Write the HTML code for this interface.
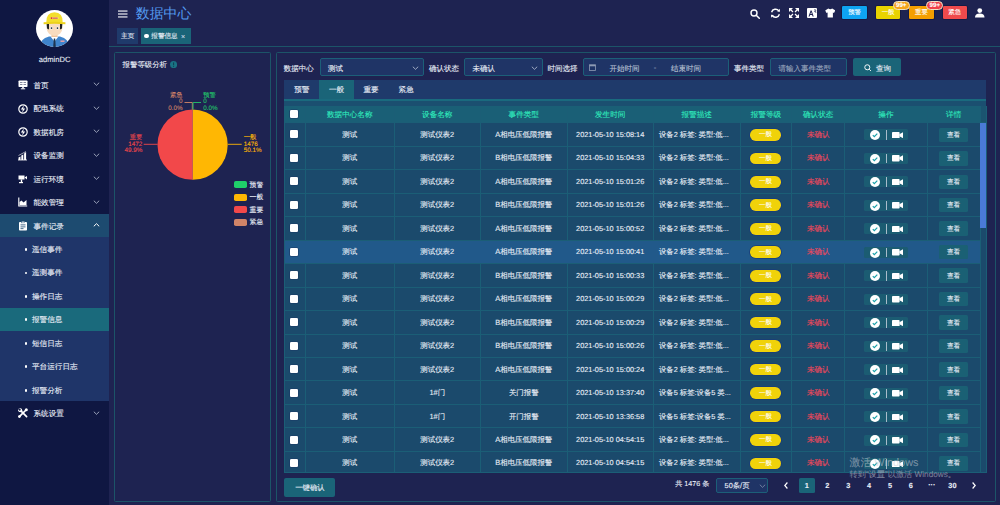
<!DOCTYPE html><html><head><meta charset="utf-8"><style>
*{margin:0;padding:0;box-sizing:border-box}
html,body{width:1000px;height:505px;overflow:hidden;background:#1e2351;font-family:"Liberation Sans",sans-serif;color:#e9eef7;font-weight:400;-webkit-text-stroke:0.1px;text-rendering:geometricPrecision}
.ab{position:absolute}
.t{position:absolute;white-space:nowrap;line-height:1}
.c{position:absolute;white-space:nowrap;line-height:1;transform:translate(-50%,-50%)}
.l{position:absolute;white-space:nowrap;line-height:1;transform:translateY(-50%)}
.r{position:absolute;white-space:nowrap;line-height:1;transform:translate(-100%,-50%)}
</style></head><body>

<div class="ab" style="left:0;top:0;width:109px;height:505px;background:#0f1742"></div>
<svg class="ab" style="left:36.1px;top:9.9px" width="37" height="37" viewBox="0 0 37 37">
<defs><clipPath id="av"><circle cx="18.5" cy="18.5" r="18.5"/></clipPath></defs>
<circle cx="18.5" cy="18.5" r="18.5" fill="#fff"/>
<g clip-path="url(#av)">
<path d="M3 37 Q4 29 13 26.5 L24 26.5 Q33 29 34 37 Z" fill="#3f84cc"/>
<path d="M14.5 26.5 L18.5 31.5 L22.5 26.5 Z" fill="#fff"/>
<path d="M17.8 28.5 L19.2 28.5 L19.8 37 L17.2 37 Z" fill="#1f3550"/>
<rect x="15.5" y="22" width="6" height="5" fill="#f0c39a"/>
<ellipse cx="18.5" cy="18.6" rx="7.8" ry="7.4" fill="#f8dcbf"/>
<path d="M10.6 14 L13 14 L13 19.5 L11 18.5 Z" fill="#222"/>
<path d="M26.4 14 L24 14 L24 19.5 L26 18.5 Z" fill="#222"/>
<circle cx="15.3" cy="18" r="1.5" fill="#fff"/><circle cx="21.7" cy="18" r="1.5" fill="#fff"/>
<circle cx="15.5" cy="18.1" r="0.9" fill="#1d2a3a"/><circle cx="21.5" cy="18.1" r="0.9" fill="#1d2a3a"/>
<path d="M10.3 12.5 Q10 2.5 18.5 2.3 Q27 2.5 26.7 12.5 Z" fill="#f3de2c"/>
<path d="M7.6 12.3 Q18.5 11 29.4 12.3 L29.4 14.2 Q18.5 13.2 7.6 14.2 Z" fill="#ecd21c"/>
<rect x="14.8" y="7.3" width="7.5" height="1.6" fill="#fff" opacity=".7"/>
<rect x="14.8" y="7.3" width="1.6" height="1.6" fill="#d22"/><rect x="16.8" y="7.6" width="5" height="1" fill="#c33"/>
<rect x="24.5" y="30.5" width="4" height="1.4" fill="#f6a0a0"/>
</g></svg>
<div class="c" style="left:54.6px;top:60.2px;font-size:7.6px">adminDC</div>
<div class="ab" style="left:0;top:213.94px;width:109px;height:23.44px;background:#1d4b70"></div>
<div class="ab" style="left:0;top:237.38px;width:109px;height:164.08px;background:#1f3569"></div>
<div class="ab" style="left:0;top:307.70px;width:109px;height:23.44px;background:#1a6a7c"></div>
<svg class="ab" style="left:17.5px;top:80.22px" width="10" height="10" viewBox="0 0 10 10"><rect x="0.5" y="0.5" width="9" height="6.5" rx="0.8" fill="#fff"/><rect x="2" y="2" width="2.5" height="1" fill="#0f1742" opacity=".5"/><rect x="2" y="4" width="2.5" height="1" fill="#0f1742" opacity=".5"/><rect x="5.5" y="2" width="2.5" height="1" fill="#0f1742" opacity=".5"/><rect x="5.5" y="4" width="2.5" height="1" fill="#0f1742" opacity=".5"/><rect x="4.2" y="7" width="1.6" height="1.5" fill="#fff"/><rect x="2.8" y="8.3" width="4.4" height="1" fill="#fff"/></svg>
<div class="l" style="left:33.5px;top:85.92px;font-size:7.6px">首页</div>
<svg class="ab" style="left:92.8px;top:82.42px" width="7" height="4" viewBox="-0.5 -0.5 7 4"><path d="M0.3 0.2 L3 2.8 L5.7 0.2" fill="none" stroke="#c8d0e0" stroke-width="0.75"/></svg>
<svg class="ab" style="left:17.5px;top:103.66px" width="10" height="10" viewBox="0 0 10 10"><circle cx="5" cy="5" r="4.2" fill="none" stroke="#fff" stroke-width="1.2"/><path d="M5.8 1.5 L2.8 5.4 L4.8 5.4 L4.2 8.5 L7.2 4.6 L5.2 4.6 Z" fill="#fff"/></svg>
<div class="l" style="left:33.5px;top:109.36px;font-size:7.6px">配电系统</div>
<svg class="ab" style="left:92.8px;top:105.86px" width="7" height="4" viewBox="-0.5 -0.5 7 4"><path d="M0.3 0.2 L3 2.8 L5.7 0.2" fill="none" stroke="#c8d0e0" stroke-width="0.75"/></svg>
<svg class="ab" style="left:17.5px;top:127.10px" width="10" height="10" viewBox="0 0 10 10"><circle cx="5" cy="5" r="4.2" fill="none" stroke="#fff" stroke-width="1.2"/><path d="M5.8 1.5 L2.8 5.4 L4.8 5.4 L4.2 8.5 L7.2 4.6 L5.2 4.6 Z" fill="#fff"/></svg>
<div class="l" style="left:33.5px;top:132.80px;font-size:7.6px">数据机房</div>
<svg class="ab" style="left:92.8px;top:129.3px" width="7" height="4" viewBox="-0.5 -0.5 7 4"><path d="M0.3 0.2 L3 2.8 L5.7 0.2" fill="none" stroke="#c8d0e0" stroke-width="0.75"/></svg>
<svg class="ab" style="left:17.5px;top:150.54px" width="10" height="10" viewBox="0 0 10 10"><path d="M0.5 9 L0.5 6.5 L2.5 5.5 L2.5 9 Z M3.3 9 L3.3 4.5 L5.3 3.5 L5.3 9 Z M6.1 9 L6.1 2.5 L8.1 1 L8.1 9 Z" fill="#fff"/><path d="M0.5 4.5 L8 0.5" stroke="#fff" stroke-width="0.6"/><rect x="0" y="8.6" width="9" height="0.8" fill="#fff"/></svg>
<div class="l" style="left:33.5px;top:156.24px;font-size:7.6px">设备监测</div>
<svg class="ab" style="left:92.8px;top:152.74px" width="7" height="4" viewBox="-0.5 -0.5 7 4"><path d="M0.3 0.2 L3 2.8 L5.7 0.2" fill="none" stroke="#c8d0e0" stroke-width="0.75"/></svg>
<svg class="ab" style="left:17.5px;top:173.98px" width="10" height="10" viewBox="0 0 10 10"><rect x="0.5" y="1.5" width="6" height="4" fill="#fff"/><path d="M6.5 3.5 L9 2 L9 5.5 Z" fill="#fff"/><rect x="2.8" y="5.5" width="1.4" height="2.5" fill="#fff"/><rect x="1" y="8" width="4" height="1.2" fill="#fff"/></svg>
<div class="l" style="left:33.5px;top:179.68px;font-size:7.6px">运行环境</div>
<svg class="ab" style="left:92.8px;top:176.18px" width="7" height="4" viewBox="-0.5 -0.5 7 4"><path d="M0.3 0.2 L3 2.8 L5.7 0.2" fill="none" stroke="#c8d0e0" stroke-width="0.75"/></svg>
<svg class="ab" style="left:17.5px;top:197.42px" width="10" height="10" viewBox="0 0 10 10"><path d="M0.8 0.5 L0.8 9 L9.2 9" fill="none" stroke="#fff" stroke-width="1.1"/><path d="M1.5 8.3 L1.5 5 L3.5 3.5 L5.5 5.5 L8.5 3 L8.5 8.3 Z" fill="#fff"/></svg>
<div class="l" style="left:33.5px;top:203.12px;font-size:7.6px">能效管理</div>
<svg class="ab" style="left:92.8px;top:199.62px" width="7" height="4" viewBox="-0.5 -0.5 7 4"><path d="M0.3 0.2 L3 2.8 L5.7 0.2" fill="none" stroke="#c8d0e0" stroke-width="0.75"/></svg>
<svg class="ab" style="left:17.5px;top:220.86px" width="10" height="10" viewBox="0 0 10 10"><rect x="1" y="1" width="8" height="8.5" rx="0.8" fill="#fff"/><rect x="3.5" y="0.3" width="3" height="1.6" fill="#fff" stroke="#1d4b70" stroke-width="0.4"/><rect x="2.5" y="3.5" width="5" height="0.8" fill="#1d4b70"/><rect x="2.5" y="5.5" width="5" height="0.8" fill="#1d4b70"/><rect x="2.5" y="7.3" width="3" height="0.8" fill="#1d4b70"/></svg>
<div class="l" style="left:33.5px;top:226.56px;font-size:7.6px">事件记录</div>
<svg class="ab" style="left:92.8px;top:223.06px" width="7" height="4" viewBox="-0.5 -0.5 7 4"><path d="M0.3 2.8 L3 0.2 L5.7 2.8" fill="none" stroke="#fff" stroke-width="1.0"/></svg>
<div class="ab" style="left:24.6px;top:248.10px;width:2.8px;height:2.8px;border-radius:50%;background:#fff"></div>
<div class="l" style="left:32px;top:250.00px;font-size:7.6px">遥信事件</div>
<div class="ab" style="left:24.6px;top:271.54px;width:2.8px;height:2.8px;border-radius:50%;background:#fff"></div>
<div class="l" style="left:32px;top:273.44px;font-size:7.6px">遥测事件</div>
<div class="ab" style="left:24.6px;top:294.98px;width:2.8px;height:2.8px;border-radius:50%;background:#fff"></div>
<div class="l" style="left:32px;top:296.88px;font-size:7.6px">操作日志</div>
<div class="ab" style="left:24.6px;top:318.42px;width:2.8px;height:2.8px;border-radius:50%;background:#fff"></div>
<div class="l" style="left:32px;top:320.32px;font-size:7.6px">报警信息</div>
<div class="ab" style="left:24.6px;top:341.86px;width:2.8px;height:2.8px;border-radius:50%;background:#fff"></div>
<div class="l" style="left:32px;top:343.76px;font-size:7.6px">短信日志</div>
<div class="ab" style="left:24.6px;top:365.30px;width:2.8px;height:2.8px;border-radius:50%;background:#fff"></div>
<div class="l" style="left:32px;top:367.20px;font-size:7.6px">平台运行日志</div>
<div class="ab" style="left:24.6px;top:388.74px;width:2.8px;height:2.8px;border-radius:50%;background:#fff"></div>
<div class="l" style="left:32px;top:390.64px;font-size:7.6px">报警分析</div>
<svg class="ab" style="left:17.5px;top:408.18px" width="10" height="10" viewBox="0 0 10 10"><path d="M2.2 2.2 L8.6 8.6" stroke="#fff" stroke-width="1.7" stroke-linecap="round"/><path d="M8 2 L1.6 8.4" stroke="#fff" stroke-width="1.7" stroke-linecap="round"/><circle cx="2.2" cy="2.2" r="2" fill="#fff"/><path d="M0.4 1.6 L1.6 0.4 L3 1.8 L1.8 3 Z" fill="#0f1742"/><circle cx="8.3" cy="1.7" r="1.5" fill="#fff"/><circle cx="1.4" cy="8.6" r="1.4" fill="#fff"/></svg>
<div class="l" style="left:33.5px;top:414.08px;font-size:7.6px">系统设置</div>
<svg class="ab" style="left:92.8px;top:410.58000000000004px" width="7" height="4" viewBox="-0.5 -0.5 7 4"><path d="M0.3 0.2 L3 2.8 L5.7 0.2" fill="none" stroke="#c8d0e0" stroke-width="0.75"/></svg>
<svg class="ab" style="left:118px;top:9.5px" width="9.5" height="8" viewBox="0 0 9.5 8"><rect x="0" y="0.5" width="9.5" height="1.1" fill="#fff"/><rect x="0" y="3.45" width="9.5" height="1.1" fill="#fff"/><rect x="0" y="6.4" width="9.5" height="1.1" fill="#fff"/></svg>
<div class="l" style="left:135.8px;top:13.6px;font-size:13.9px;color:#559cf2;font-weight:400;-webkit-text-stroke:0">数据中心</div>
<svg class="ab" style="left:750px;top:8.5px" width="10" height="10" viewBox="0 0 10 10"><circle cx="4" cy="4" r="3" fill="none" stroke="#fff" stroke-width="1.4"/><path d="M6.2 6.2 L9.3 9.3" stroke="#fff" stroke-width="1.5" stroke-linecap="round"/></svg>
<svg class="ab" style="left:769.5px;top:8px" width="11" height="10.5" viewBox="0 0 11 10.5"><path d="M1.6 4.2 A4 4 0 0 1 8.8 3" fill="none" stroke="#fff" stroke-width="1.4"/><path d="M9.4 6.3 A4 4 0 0 1 2.2 7.5" fill="none" stroke="#fff" stroke-width="1.4"/><path d="M7.2 3.6 L10 3.8 L9.8 0.8 Z" fill="#fff"/><path d="M3.8 6.9 L1 6.7 L1.2 9.7 Z" fill="#fff"/></svg>
<svg class="ab" style="left:789px;top:8px" width="10" height="10" viewBox="0 0 10 10"><g fill="#fff"><path d="M0 0 L4 0 L0 4 Z M10 0 L6 0 L10 4 Z M0 10 L4 10 L0 6 Z M10 10 L6 10 L10 6 Z"/></g><g stroke="#fff" stroke-width="1.2"><path d="M1.5 1.5 L4 4 M8.5 1.5 L6 4 M1.5 8.5 L4 6 M8.5 8.5 L6 6"/></g></svg>
<svg class="ab" style="left:807px;top:8px" width="10" height="10" viewBox="0 0 10 10"><rect x="0" y="0" width="10" height="10" rx="1" fill="#fff"/><path d="M1.5 8.5 L3.6 2.5 L4.6 2.5 L6.7 8.5 L5.6 8.5 L5.1 7 L3.1 7 L2.6 8.5 Z M3.4 6 L4.8 6 L4.1 3.9 Z" fill="#1e2351"/><path d="M7 1.8 H8.8 V3 H7.6 V3.6 H8.8 V5" fill="none" stroke="#1e2351" stroke-width="0.6"/></svg>
<svg class="ab" style="left:824.5px;top:8px" width="10.5" height="10" viewBox="0 0 10.5 10"><path d="M3.3 0.5 Q5.25 2 7.2 0.5 L10.3 2.4 L9 5 L7.9 4.5 L7.9 9.6 L2.6 9.6 L2.6 4.5 L1.5 5 L0.2 2.4 Z" fill="#fff"/></svg>
<div class="ab" style="left:842.4px;top:6.4px;width:24.3px;height:12.3px;background:#0ea4f2;border-radius:1.3px;box-shadow:0 0 0 0.8px #151a40"></div>
<div class="c" style="left:854.55px;top:13.3px;font-size:6.4px;color:#fff;font-weight:500">预警</div>
<div class="ab" style="left:876px;top:6.4px;width:24.2px;height:12.3px;background:#e9d300;border-radius:1.3px;box-shadow:0 0 0 0.8px #151a40"></div>
<div class="c" style="left:888.1px;top:13.3px;font-size:6.4px;color:#fff;font-weight:500">一般</div>
<div class="ab" style="left:909.3px;top:6.4px;width:24.4px;height:12.3px;background:#f59f00;border-radius:1.3px;box-shadow:0 0 0 0.8px #151a40"></div>
<div class="c" style="left:921.5px;top:13.3px;font-size:6.4px;color:#fff;font-weight:500">重要</div>
<div class="ab" style="left:942.6px;top:6.4px;width:24.1px;height:12.3px;background:#f04a4c;border-radius:1.3px;box-shadow:0 0 0 0.8px #151a40"></div>
<div class="c" style="left:954.65px;top:13.3px;font-size:6.4px;color:#fff;font-weight:500">紧急</div>
<div class="ab" style="left:892.7px;top:1.2px;width:17px;height:9px;background:#f5a51a;border-radius:4.5px;border:0.7px solid #efe3c4"></div>
<div class="c" style="left:901.2px;top:5.8px;font-size:6.2px;color:#fff;font-weight:700">99+</div>
<div class="ab" style="left:926.3px;top:1.2px;width:17px;height:9px;background:#f0404a;border-radius:4.5px;border:0.7px solid #efe3c4"></div>
<div class="c" style="left:934.8px;top:5.8px;font-size:6.2px;color:#fff;font-weight:700">99+</div>
<svg class="ab" style="left:975px;top:8.3px" width="9.5" height="9.5" viewBox="0 0 9.5 9.5"><circle cx="4.75" cy="2.6" r="2.4" fill="#fff"/><path d="M0 9.5 Q0 5.6 4.75 5.6 Q9.5 5.6 9.5 9.5 Z" fill="#fff"/></svg>
<div class="ab" style="left:117px;top:28px;width:21.3px;height:15.5px;background:#1f3a6b"></div>
<div class="c" style="left:127.7px;top:37px;font-size:6.6px">主页</div>
<div class="ab" style="left:140.6px;top:28px;width:50.5px;height:15.5px;background:#1a6478"></div>
<div class="ab" style="left:144.4px;top:33.7px;width:4.3px;height:4.3px;border-radius:50%;background:#fff"></div>
<div class="l" style="left:151.3px;top:37px;font-size:6.6px">报警信息</div>
<div class="c" style="left:183px;top:37px;font-size:7px;color:#c9d3e3">×</div>
<div class="ab" style="left:109px;top:46.2px;width:891px;height:1.3px;background:#1c5468"></div>
<div class="ab" style="left:114.2px;top:51.8px;width:157.2px;height:450.4px;border:1.4px solid #1c5468;border-radius:1.5px"></div>
<div class="ab" style="left:275.5px;top:51.8px;width:720px;height:450.4px;border:1.4px solid #1c5468;border-radius:1.5px"></div>
<div class="l" style="left:122.6px;top:64.8px;font-size:7.4px">报警等级分析</div>
<svg class="ab" style="left:169.8px;top:60.9px" width="7.2" height="7.2" viewBox="0 0 10 10"><circle cx="5" cy="5" r="5" fill="#1a7284"/><rect x="4.3" y="2" width="1.4" height="3.8" fill="#0f3e54"/><rect x="4.3" y="6.7" width="1.4" height="1.4" fill="#0f3e54"/></svg>
<svg class="ab" style="left:0;top:0" width="280" height="240" viewBox="0 0 280 240"><path d="M192.6 144.7 L192.6 109.6 A35.1 35.1 0 0 1 192.6 179.79999999999998 Z" fill="#ffb703"/><path d="M192.6 144.7 L192.6 179.79999999999998 A35.1 35.1 0 0 1 192.6 109.6 Z" fill="#f2484a"/><path d="M192.6 109.6 L192.6 179.79999999999998" stroke="#fff" stroke-width="0.3" opacity="0.3"/><path d="M157.6 144.3 L143.7 144.3" stroke="#f2484a" stroke-width="0.9" fill="none"/><path d="M227.8 144.3 L241.7 144.3" stroke="#ffb703" stroke-width="0.9" fill="none"/><path d="M192.3 109.6 L192.3 102.5 L184.5 102.5" stroke="#d08468" stroke-width="0.9" fill="none"/><path d="M193.1 109.6 L193.1 102.5 L201 102.5" stroke="#22c36a" stroke-width="0.9" fill="none"/></svg>
<div class="r" style="left:182.5px;top:95.90px;font-size:6.3px;color:#d08468">紧急</div>
<div class="r" style="left:182.5px;top:102.25px;font-size:6.3px;color:#d08468">0</div>
<div class="r" style="left:182.5px;top:108.60px;font-size:6.3px;color:#d08468">0.0%</div>
<div class="l" style="left:203.2px;top:95.90px;font-size:6.3px;color:#22c36a">预警</div>
<div class="l" style="left:203.2px;top:102.25px;font-size:6.3px;color:#22c36a">0</div>
<div class="l" style="left:203.2px;top:108.60px;font-size:6.3px;color:#22c36a">0.0%</div>
<div class="r" style="left:142.3px;top:138.40px;font-size:6.3px;color:#f2484a">重要</div>
<div class="r" style="left:142.3px;top:144.75px;font-size:6.3px;color:#f2484a">1472</div>
<div class="r" style="left:142.3px;top:151.10px;font-size:6.3px;color:#f2484a">49.9%</div>
<div class="l" style="left:243.8px;top:138.40px;font-size:6.3px;color:#ffb703">一般</div>
<div class="l" style="left:243.8px;top:144.75px;font-size:6.3px;color:#ffb703">1476</div>
<div class="l" style="left:243.8px;top:151.10px;font-size:6.3px;color:#ffb703">50.1%</div>
<div class="ab" style="left:234.4px;top:181.30px;width:13px;height:7px;border-radius:1.8px;background:#1fcf6a"></div>
<div class="l" style="left:249.6px;top:185.90px;font-size:6.8px">预警</div>
<div class="ab" style="left:234.4px;top:193.80px;width:13px;height:7px;border-radius:1.8px;background:#ffb703"></div>
<div class="l" style="left:249.6px;top:198.40px;font-size:6.8px">一般</div>
<div class="ab" style="left:234.4px;top:206.30px;width:13px;height:7px;border-radius:1.8px;background:#f2484a"></div>
<div class="l" style="left:249.6px;top:210.90px;font-size:6.8px">重要</div>
<div class="ab" style="left:234.4px;top:218.80px;width:13px;height:7px;border-radius:1.8px;background:#d08468"></div>
<div class="l" style="left:249.6px;top:223.40px;font-size:6.8px">紧急</div>
<div class="l" style="left:283.8px;top:68.6px;font-size:7.5px">数据中心</div>
<div class="ab" style="left:319.7px;top:57.8px;width:104.3px;height:18.6px;background:#1f3466;border:1px solid #1c5f78;border-radius:2px"></div>
<div class="l" style="left:328px;top:68.6px;font-size:7.5px">测试</div>
<svg class="ab" style="left:411.8px;top:65.8px" width="7" height="4" viewBox="-0.5 -0.5 7 4"><path d="M0.3 0.2 L3 2.8 L5.7 0.2" fill="none" stroke="#c8d0e0" stroke-width="0.75"/></svg>
<div class="l" style="left:429px;top:68.6px;font-size:7.5px">确认状态</div>
<div class="ab" style="left:464.2px;top:57.8px;width:78.8px;height:18.6px;background:#1f3466;border:1px solid #1c5f78;border-radius:2px"></div>
<div class="l" style="left:472.5px;top:68.6px;font-size:7.5px">未确认</div>
<svg class="ab" style="left:530.8px;top:65.8px" width="7" height="4" viewBox="-0.5 -0.5 7 4"><path d="M0.3 0.2 L3 2.8 L5.7 0.2" fill="none" stroke="#c8d0e0" stroke-width="0.75"/></svg>
<div class="l" style="left:547.6px;top:68.6px;font-size:7.5px">时间选择</div>
<div class="ab" style="left:583px;top:57.8px;width:146px;height:18.6px;background:#1f3466;border:1px solid #1c5f78;border-radius:2px"></div>
<svg class="ab" style="left:589px;top:63.5px" width="7" height="7" viewBox="0 0 7 7"><rect x="0.5" y="0.8" width="6" height="5.7" fill="none" stroke="#8d9ab3" stroke-width="0.8"/><rect x="0.5" y="0.8" width="6" height="1.5" fill="#8d9ab3"/></svg>
<div class="l" style="left:609.6px;top:68.6px;font-size:7.5px;color:#b8c2d4">开始时间</div>
<div class="c" style="left:655px;top:68.4px;font-size:7.5px;color:#b8c2d4">-</div>
<div class="l" style="left:671px;top:68.6px;font-size:7.5px;color:#b8c2d4">结束时间</div>
<div class="l" style="left:734px;top:68.6px;font-size:7.5px">事件类型</div>
<div class="ab" style="left:770px;top:57.8px;width:77.4px;height:18.6px;background:#1f3466;border:1px solid #1c5f78;border-radius:2px"></div>
<div class="l" style="left:778.6px;top:68.6px;font-size:7.5px;color:#9aa6bd">请输入事件类型</div>
<div class="ab" style="left:853px;top:57.8px;width:48px;height:18.6px;background:#1a6478;border-radius:2px"></div>
<svg class="ab" style="left:864px;top:63.6px" width="7.5" height="7.5" viewBox="0 0 8 8"><circle cx="3.5" cy="3.5" r="2.7" fill="none" stroke="#fff" stroke-width="1"/><path d="M5.5 5.5 L7.4 7.4" stroke="#fff" stroke-width="1"/></svg>
<div class="l" style="left:876px;top:68.6px;font-size:7.5px">查询</div>
<div class="ab" style="left:284.3px;top:79.8px;width:702px;height:19.3px;background:#1f3a6b"></div>
<div class="ab" style="left:318.8px;top:79.8px;width:35.4px;height:19.3px;background:#1a6478"></div>
<div class="c" style="left:301.8px;top:89.8px;font-size:7.6px">预警</div>
<div class="c" style="left:336.5px;top:89.8px;font-size:7.6px">一般</div>
<div class="c" style="left:371px;top:89.8px;font-size:7.6px">重要</div>
<div class="c" style="left:406.2px;top:89.8px;font-size:7.6px">紧急</div>
<div class="ab" style="left:284.3px;top:98.9px;width:702px;height:2.4px;background:#1a6a7e"></div>
<div class="ab" style="left:284.3px;top:101.3px;width:702px;height:4.8px;background:#1b4f70"></div>
<div class="ab" style="left:284.3px;top:106.0px;width:695.7px;height:16.700000000000003px;background:#1a5f76"></div>
<div class="ab" style="left:980px;top:106.0px;width:6.3px;height:16.700000000000003px;background:#1b5470"></div>
<div class="ab" style="left:284.3px;top:122.7px;width:695.7px;height:349.8px;background:#1b4a6c"></div>
<div class="ab" style="left:980px;top:122.7px;width:6.3px;height:349.8px;background:#1b4a6c"></div>
<div class="ab" style="left:284.3px;top:122.20px;width:702.0px;height:1px;background:#1b5e76"></div>
<div class="ab" style="left:284.3px;top:145.68px;width:695.7px;height:1px;background:#1b5e76"></div>
<div class="ab" style="left:284.3px;top:169.16px;width:695.7px;height:1px;background:#1b5e76"></div>
<div class="ab" style="left:284.3px;top:192.64px;width:695.7px;height:1px;background:#1b5e76"></div>
<div class="ab" style="left:284.3px;top:216.12px;width:695.7px;height:1px;background:#1b5e76"></div>
<div class="ab" style="left:284.3px;top:239.60px;width:695.7px;height:1px;background:#1b5e76"></div>
<div class="ab" style="left:284.3px;top:263.08px;width:695.7px;height:1px;background:#1b5e76"></div>
<div class="ab" style="left:284.3px;top:286.56px;width:695.7px;height:1px;background:#1b5e76"></div>
<div class="ab" style="left:284.3px;top:310.04px;width:695.7px;height:1px;background:#1b5e76"></div>
<div class="ab" style="left:284.3px;top:333.52px;width:695.7px;height:1px;background:#1b5e76"></div>
<div class="ab" style="left:284.3px;top:357.00px;width:695.7px;height:1px;background:#1b5e76"></div>
<div class="ab" style="left:284.3px;top:380.48px;width:695.7px;height:1px;background:#1b5e76"></div>
<div class="ab" style="left:284.3px;top:403.96px;width:695.7px;height:1px;background:#1b5e76"></div>
<div class="ab" style="left:284.3px;top:427.44px;width:695.7px;height:1px;background:#1b5e76"></div>
<div class="ab" style="left:284.3px;top:450.92px;width:695.7px;height:1px;background:#1b5e76"></div>
<div class="ab" style="left:284.3px;top:472.00px;width:702.0px;height:1px;background:#1b5e76"></div>
<div class="ab" style="left:305.00px;top:106.0px;width:1px;height:366.5px;background:#1b5e76"></div>
<div class="ab" style="left:393.50px;top:106.0px;width:1px;height:366.5px;background:#1b5e76"></div>
<div class="ab" style="left:480.00px;top:106.0px;width:1px;height:366.5px;background:#1b5e76"></div>
<div class="ab" style="left:566.50px;top:106.0px;width:1px;height:366.5px;background:#1b5e76"></div>
<div class="ab" style="left:652.90px;top:106.0px;width:1px;height:366.5px;background:#1b5e76"></div>
<div class="ab" style="left:739.50px;top:106.0px;width:1px;height:366.5px;background:#1b5e76"></div>
<div class="ab" style="left:791.30px;top:106.0px;width:1px;height:366.5px;background:#1b5e76"></div>
<div class="ab" style="left:844.00px;top:106.0px;width:1px;height:366.5px;background:#1b5e76"></div>
<div class="ab" style="left:926.90px;top:106.0px;width:1px;height:366.5px;background:#1b5e76"></div>
<div class="ab" style="left:979.50px;top:106.0px;width:1px;height:366.5px;background:#1b5e76"></div>
<div class="ab" style="left:985.80px;top:106.0px;width:1px;height:366.5px;background:#1b5e76"></div>
<div class="ab" style="left:283.75px;top:106.0px;width:1.1px;height:366.5px;background:#1b5e76"></div>
<div class="ab" style="left:284.8px;top:240.10px;width:695.2px;height:23.48px;background:#21598a"></div>
<div class="ab" style="left:284.3px;top:239.60px;width:695.7px;height:1px;background:#1b5e76"></div>
<div class="ab" style="left:284.3px;top:263.08px;width:695.7px;height:1px;background:#1b5e76"></div>
<div class="ab" style="left:979.7px;top:123.3px;width:6.4px;height:104.6px;background:#4a7ad8"></div>
<div class="ab" style="left:289.8px;top:110.35px;width:8px;height:8px;background:#fff;border-radius:1.3px;box-shadow:0 0 0 0.6px #1b3a66"></div>
<div class="c" style="left:349.75px;top:114.65px;font-size:7.6px;color:#30ebbd">数据中心名称</div>
<div class="c" style="left:437.25px;top:114.65px;font-size:7.6px;color:#30ebbd">设备名称</div>
<div class="c" style="left:523.75px;top:114.65px;font-size:7.6px;color:#30ebbd">事件类型</div>
<div class="c" style="left:610.20px;top:114.65px;font-size:7.6px;color:#30ebbd">发生时间</div>
<div class="c" style="left:696.70px;top:114.65px;font-size:7.6px;color:#30ebbd">报警描述</div>
<div class="c" style="left:765.90px;top:114.65px;font-size:7.6px;color:#30ebbd">报警等级</div>
<div class="c" style="left:818.15px;top:114.65px;font-size:7.6px;color:#30ebbd">确认状态</div>
<div class="c" style="left:885.95px;top:114.65px;font-size:7.6px;color:#30ebbd">操作</div>
<div class="c" style="left:953.70px;top:114.65px;font-size:7.6px;color:#30ebbd">详情</div>
<div class="ab" style="left:289.8px;top:130.44px;width:8px;height:8px;background:#fff;border-radius:1.3px;box-shadow:0 0 0 0.6px #1b3a66"></div>
<div class="c" style="left:349.75px;top:134.74px;font-size:7.45px">测试</div>
<div class="c" style="left:437.25px;top:134.74px;font-size:7.45px">测试仪表2</div>
<div class="c" style="left:523.75px;top:134.74px;font-size:7.45px">A相电压低限报警</div>
<div class="c" style="left:610.20px;top:134.74px;font-size:7.35px">2021-05-10 15:08:14</div>
<div class="l" style="left:659px;top:134.74px;font-size:7.35px">设备2 标签: 类型:低...</div>
<div class="ab" style="left:750px;top:129.04px;width:31px;height:11.6px;border-radius:5.8px;background:#f0d20a;box-shadow:0 0 0 0.8px #1a3d7a"></div>
<div class="c" style="left:765.5px;top:135.24px;font-size:6.4px;color:#fff">一般</div>
<div class="c" style="left:818.3px;top:134.74px;font-size:7.6px;color:#f2475a">未确认</div>
<div class="ab" style="left:864px;top:129.44px;width:43.5px;height:11px;border-radius:1.5px;background:#1b5c72"></div>
<svg class="ab" style="left:870px;top:130.14px" width="10" height="10" viewBox="0 0 10 10"><circle cx="5" cy="5" r="5" fill="#fff"/><path d="M2.8 5.1 L4.3 6.6 L7.3 3.6" fill="none" stroke="#1aa0a8" stroke-width="1.2"/></svg>
<div class="ab" style="left:885.6px;top:130.34px;width:1.1px;height:9.6px;background:#a9bccb"></div>
<svg class="ab" style="left:891.5px;top:131.94px" width="11" height="6.5" viewBox="0 0 11 6.5"><rect x="0" y="0" width="7.6" height="6.5" rx="0.8" fill="#fff"/><path d="M7.4 2.2 L11 0.3 L11 6.2 L7.4 4.3 Z" fill="#fff"/></svg>
<div class="ab" style="left:939.2px;top:127.54px;width:28.8px;height:14.5px;border-radius:1.5px;background:#1a6074"></div>
<div class="c" style="left:953.6px;top:135.74px;font-size:6.6px">查看</div>
<div class="ab" style="left:289.8px;top:153.92px;width:8px;height:8px;background:#fff;border-radius:1.3px;box-shadow:0 0 0 0.6px #1b3a66"></div>
<div class="c" style="left:349.75px;top:158.22px;font-size:7.45px">测试</div>
<div class="c" style="left:437.25px;top:158.22px;font-size:7.45px">测试仪表2</div>
<div class="c" style="left:523.75px;top:158.22px;font-size:7.45px">B相电压低限报警</div>
<div class="c" style="left:610.20px;top:158.22px;font-size:7.35px">2021-05-10 15:04:33</div>
<div class="l" style="left:659px;top:158.22px;font-size:7.35px">设备2 标签: 类型:低...</div>
<div class="ab" style="left:750px;top:152.52px;width:31px;height:11.6px;border-radius:5.8px;background:#f0d20a;box-shadow:0 0 0 0.8px #1a3d7a"></div>
<div class="c" style="left:765.5px;top:158.72px;font-size:6.4px;color:#fff">一般</div>
<div class="c" style="left:818.3px;top:158.22px;font-size:7.6px;color:#f2475a">未确认</div>
<div class="ab" style="left:864px;top:152.92px;width:43.5px;height:11px;border-radius:1.5px;background:#1b5c72"></div>
<svg class="ab" style="left:870px;top:153.62px" width="10" height="10" viewBox="0 0 10 10"><circle cx="5" cy="5" r="5" fill="#fff"/><path d="M2.8 5.1 L4.3 6.6 L7.3 3.6" fill="none" stroke="#1aa0a8" stroke-width="1.2"/></svg>
<div class="ab" style="left:885.6px;top:153.82px;width:1.1px;height:9.6px;background:#a9bccb"></div>
<svg class="ab" style="left:891.5px;top:155.42px" width="11" height="6.5" viewBox="0 0 11 6.5"><rect x="0" y="0" width="7.6" height="6.5" rx="0.8" fill="#fff"/><path d="M7.4 2.2 L11 0.3 L11 6.2 L7.4 4.3 Z" fill="#fff"/></svg>
<div class="ab" style="left:939.2px;top:151.02px;width:28.8px;height:14.5px;border-radius:1.5px;background:#1a6074"></div>
<div class="c" style="left:953.6px;top:159.22px;font-size:6.6px">查看</div>
<div class="ab" style="left:289.8px;top:177.40px;width:8px;height:8px;background:#fff;border-radius:1.3px;box-shadow:0 0 0 0.6px #1b3a66"></div>
<div class="c" style="left:349.75px;top:181.70px;font-size:7.45px">测试</div>
<div class="c" style="left:437.25px;top:181.70px;font-size:7.45px">测试仪表2</div>
<div class="c" style="left:523.75px;top:181.70px;font-size:7.45px">A相电压低限报警</div>
<div class="c" style="left:610.20px;top:181.70px;font-size:7.35px">2021-05-10 15:01:26</div>
<div class="l" style="left:659px;top:181.70px;font-size:7.35px">设备2 标签: 类型:低...</div>
<div class="ab" style="left:750px;top:176.00px;width:31px;height:11.6px;border-radius:5.8px;background:#f0d20a;box-shadow:0 0 0 0.8px #1a3d7a"></div>
<div class="c" style="left:765.5px;top:182.20px;font-size:6.4px;color:#fff">一般</div>
<div class="c" style="left:818.3px;top:181.70px;font-size:7.6px;color:#f2475a">未确认</div>
<div class="ab" style="left:864px;top:176.40px;width:43.5px;height:11px;border-radius:1.5px;background:#1b5c72"></div>
<svg class="ab" style="left:870px;top:177.10px" width="10" height="10" viewBox="0 0 10 10"><circle cx="5" cy="5" r="5" fill="#fff"/><path d="M2.8 5.1 L4.3 6.6 L7.3 3.6" fill="none" stroke="#1aa0a8" stroke-width="1.2"/></svg>
<div class="ab" style="left:885.6px;top:177.30px;width:1.1px;height:9.6px;background:#a9bccb"></div>
<svg class="ab" style="left:891.5px;top:178.90px" width="11" height="6.5" viewBox="0 0 11 6.5"><rect x="0" y="0" width="7.6" height="6.5" rx="0.8" fill="#fff"/><path d="M7.4 2.2 L11 0.3 L11 6.2 L7.4 4.3 Z" fill="#fff"/></svg>
<div class="ab" style="left:939.2px;top:174.50px;width:28.8px;height:14.5px;border-radius:1.5px;background:#1a6074"></div>
<div class="c" style="left:953.6px;top:182.70px;font-size:6.6px">查看</div>
<div class="ab" style="left:289.8px;top:200.88px;width:8px;height:8px;background:#fff;border-radius:1.3px;box-shadow:0 0 0 0.6px #1b3a66"></div>
<div class="c" style="left:349.75px;top:205.18px;font-size:7.45px">测试</div>
<div class="c" style="left:437.25px;top:205.18px;font-size:7.45px">测试仪表2</div>
<div class="c" style="left:523.75px;top:205.18px;font-size:7.45px">B相电压低限报警</div>
<div class="c" style="left:610.20px;top:205.18px;font-size:7.35px">2021-05-10 15:01:26</div>
<div class="l" style="left:659px;top:205.18px;font-size:7.35px">设备2 标签: 类型:低...</div>
<div class="ab" style="left:750px;top:199.48px;width:31px;height:11.6px;border-radius:5.8px;background:#f0d20a;box-shadow:0 0 0 0.8px #1a3d7a"></div>
<div class="c" style="left:765.5px;top:205.68px;font-size:6.4px;color:#fff">一般</div>
<div class="c" style="left:818.3px;top:205.18px;font-size:7.6px;color:#f2475a">未确认</div>
<div class="ab" style="left:864px;top:199.88px;width:43.5px;height:11px;border-radius:1.5px;background:#1b5c72"></div>
<svg class="ab" style="left:870px;top:200.58px" width="10" height="10" viewBox="0 0 10 10"><circle cx="5" cy="5" r="5" fill="#fff"/><path d="M2.8 5.1 L4.3 6.6 L7.3 3.6" fill="none" stroke="#1aa0a8" stroke-width="1.2"/></svg>
<div class="ab" style="left:885.6px;top:200.78px;width:1.1px;height:9.6px;background:#a9bccb"></div>
<svg class="ab" style="left:891.5px;top:202.38px" width="11" height="6.5" viewBox="0 0 11 6.5"><rect x="0" y="0" width="7.6" height="6.5" rx="0.8" fill="#fff"/><path d="M7.4 2.2 L11 0.3 L11 6.2 L7.4 4.3 Z" fill="#fff"/></svg>
<div class="ab" style="left:939.2px;top:197.98px;width:28.8px;height:14.5px;border-radius:1.5px;background:#1a6074"></div>
<div class="c" style="left:953.6px;top:206.18px;font-size:6.6px">查看</div>
<div class="ab" style="left:289.8px;top:224.36px;width:8px;height:8px;background:#fff;border-radius:1.3px;box-shadow:0 0 0 0.6px #1b3a66"></div>
<div class="c" style="left:349.75px;top:228.66px;font-size:7.45px">测试</div>
<div class="c" style="left:437.25px;top:228.66px;font-size:7.45px">测试仪表2</div>
<div class="c" style="left:523.75px;top:228.66px;font-size:7.45px">A相电压低限报警</div>
<div class="c" style="left:610.20px;top:228.66px;font-size:7.35px">2021-05-10 15:00:52</div>
<div class="l" style="left:659px;top:228.66px;font-size:7.35px">设备2 标签: 类型:低...</div>
<div class="ab" style="left:750px;top:222.96px;width:31px;height:11.6px;border-radius:5.8px;background:#f0d20a;box-shadow:0 0 0 0.8px #1a3d7a"></div>
<div class="c" style="left:765.5px;top:229.16px;font-size:6.4px;color:#fff">一般</div>
<div class="c" style="left:818.3px;top:228.66px;font-size:7.6px;color:#f2475a">未确认</div>
<div class="ab" style="left:864px;top:223.36px;width:43.5px;height:11px;border-radius:1.5px;background:#1b5c72"></div>
<svg class="ab" style="left:870px;top:224.06px" width="10" height="10" viewBox="0 0 10 10"><circle cx="5" cy="5" r="5" fill="#fff"/><path d="M2.8 5.1 L4.3 6.6 L7.3 3.6" fill="none" stroke="#1aa0a8" stroke-width="1.2"/></svg>
<div class="ab" style="left:885.6px;top:224.26px;width:1.1px;height:9.6px;background:#a9bccb"></div>
<svg class="ab" style="left:891.5px;top:225.86px" width="11" height="6.5" viewBox="0 0 11 6.5"><rect x="0" y="0" width="7.6" height="6.5" rx="0.8" fill="#fff"/><path d="M7.4 2.2 L11 0.3 L11 6.2 L7.4 4.3 Z" fill="#fff"/></svg>
<div class="ab" style="left:939.2px;top:221.46px;width:28.8px;height:14.5px;border-radius:1.5px;background:#1a6074"></div>
<div class="c" style="left:953.6px;top:229.66px;font-size:6.6px">查看</div>
<div class="ab" style="left:289.8px;top:247.84px;width:8px;height:8px;background:#fff;border-radius:1.3px;box-shadow:0 0 0 0.6px #1b3a66"></div>
<div class="c" style="left:349.75px;top:252.14px;font-size:7.45px">测试</div>
<div class="c" style="left:437.25px;top:252.14px;font-size:7.45px">测试仪表2</div>
<div class="c" style="left:523.75px;top:252.14px;font-size:7.45px">A相电压低限报警</div>
<div class="c" style="left:610.20px;top:252.14px;font-size:7.35px">2021-05-10 15:00:41</div>
<div class="l" style="left:659px;top:252.14px;font-size:7.35px">设备2 标签: 类型:低...</div>
<div class="ab" style="left:750px;top:246.44px;width:31px;height:11.6px;border-radius:5.8px;background:#f0d20a;box-shadow:0 0 0 0.8px #1a3d7a"></div>
<div class="c" style="left:765.5px;top:252.64px;font-size:6.4px;color:#fff">一般</div>
<div class="c" style="left:818.3px;top:252.14px;font-size:7.6px;color:#f2475a">未确认</div>
<div class="ab" style="left:864px;top:246.84px;width:43.5px;height:11px;border-radius:1.5px;background:#1b5c72"></div>
<svg class="ab" style="left:870px;top:247.54px" width="10" height="10" viewBox="0 0 10 10"><circle cx="5" cy="5" r="5" fill="#fff"/><path d="M2.8 5.1 L4.3 6.6 L7.3 3.6" fill="none" stroke="#1aa0a8" stroke-width="1.2"/></svg>
<div class="ab" style="left:885.6px;top:247.74px;width:1.1px;height:9.6px;background:#a9bccb"></div>
<svg class="ab" style="left:891.5px;top:249.34px" width="11" height="6.5" viewBox="0 0 11 6.5"><rect x="0" y="0" width="7.6" height="6.5" rx="0.8" fill="#fff"/><path d="M7.4 2.2 L11 0.3 L11 6.2 L7.4 4.3 Z" fill="#fff"/></svg>
<div class="ab" style="left:939.2px;top:244.94px;width:28.8px;height:14.5px;border-radius:1.5px;background:#1a6074"></div>
<div class="c" style="left:953.6px;top:253.14px;font-size:6.6px">查看</div>
<div class="ab" style="left:289.8px;top:271.32px;width:8px;height:8px;background:#fff;border-radius:1.3px;box-shadow:0 0 0 0.6px #1b3a66"></div>
<div class="c" style="left:349.75px;top:275.62px;font-size:7.45px">测试</div>
<div class="c" style="left:437.25px;top:275.62px;font-size:7.45px">测试仪表2</div>
<div class="c" style="left:523.75px;top:275.62px;font-size:7.45px">B相电压低限报警</div>
<div class="c" style="left:610.20px;top:275.62px;font-size:7.35px">2021-05-10 15:00:33</div>
<div class="l" style="left:659px;top:275.62px;font-size:7.35px">设备2 标签: 类型:低...</div>
<div class="ab" style="left:750px;top:269.92px;width:31px;height:11.6px;border-radius:5.8px;background:#f0d20a;box-shadow:0 0 0 0.8px #1a3d7a"></div>
<div class="c" style="left:765.5px;top:276.12px;font-size:6.4px;color:#fff">一般</div>
<div class="c" style="left:818.3px;top:275.62px;font-size:7.6px;color:#f2475a">未确认</div>
<div class="ab" style="left:864px;top:270.32px;width:43.5px;height:11px;border-radius:1.5px;background:#1b5c72"></div>
<svg class="ab" style="left:870px;top:271.02px" width="10" height="10" viewBox="0 0 10 10"><circle cx="5" cy="5" r="5" fill="#fff"/><path d="M2.8 5.1 L4.3 6.6 L7.3 3.6" fill="none" stroke="#1aa0a8" stroke-width="1.2"/></svg>
<div class="ab" style="left:885.6px;top:271.22px;width:1.1px;height:9.6px;background:#a9bccb"></div>
<svg class="ab" style="left:891.5px;top:272.82px" width="11" height="6.5" viewBox="0 0 11 6.5"><rect x="0" y="0" width="7.6" height="6.5" rx="0.8" fill="#fff"/><path d="M7.4 2.2 L11 0.3 L11 6.2 L7.4 4.3 Z" fill="#fff"/></svg>
<div class="ab" style="left:939.2px;top:268.42px;width:28.8px;height:14.5px;border-radius:1.5px;background:#1a6074"></div>
<div class="c" style="left:953.6px;top:276.62px;font-size:6.6px">查看</div>
<div class="ab" style="left:289.8px;top:294.80px;width:8px;height:8px;background:#fff;border-radius:1.3px;box-shadow:0 0 0 0.6px #1b3a66"></div>
<div class="c" style="left:349.75px;top:299.10px;font-size:7.45px">测试</div>
<div class="c" style="left:437.25px;top:299.10px;font-size:7.45px">测试仪表2</div>
<div class="c" style="left:523.75px;top:299.10px;font-size:7.45px">A相电压低限报警</div>
<div class="c" style="left:610.20px;top:299.10px;font-size:7.35px">2021-05-10 15:00:29</div>
<div class="l" style="left:659px;top:299.10px;font-size:7.35px">设备2 标签: 类型:低...</div>
<div class="ab" style="left:750px;top:293.40px;width:31px;height:11.6px;border-radius:5.8px;background:#f0d20a;box-shadow:0 0 0 0.8px #1a3d7a"></div>
<div class="c" style="left:765.5px;top:299.60px;font-size:6.4px;color:#fff">一般</div>
<div class="c" style="left:818.3px;top:299.10px;font-size:7.6px;color:#f2475a">未确认</div>
<div class="ab" style="left:864px;top:293.80px;width:43.5px;height:11px;border-radius:1.5px;background:#1b5c72"></div>
<svg class="ab" style="left:870px;top:294.50px" width="10" height="10" viewBox="0 0 10 10"><circle cx="5" cy="5" r="5" fill="#fff"/><path d="M2.8 5.1 L4.3 6.6 L7.3 3.6" fill="none" stroke="#1aa0a8" stroke-width="1.2"/></svg>
<div class="ab" style="left:885.6px;top:294.70px;width:1.1px;height:9.6px;background:#a9bccb"></div>
<svg class="ab" style="left:891.5px;top:296.30px" width="11" height="6.5" viewBox="0 0 11 6.5"><rect x="0" y="0" width="7.6" height="6.5" rx="0.8" fill="#fff"/><path d="M7.4 2.2 L11 0.3 L11 6.2 L7.4 4.3 Z" fill="#fff"/></svg>
<div class="ab" style="left:939.2px;top:291.90px;width:28.8px;height:14.5px;border-radius:1.5px;background:#1a6074"></div>
<div class="c" style="left:953.6px;top:300.10px;font-size:6.6px">查看</div>
<div class="ab" style="left:289.8px;top:318.28px;width:8px;height:8px;background:#fff;border-radius:1.3px;box-shadow:0 0 0 0.6px #1b3a66"></div>
<div class="c" style="left:349.75px;top:322.58px;font-size:7.45px">测试</div>
<div class="c" style="left:437.25px;top:322.58px;font-size:7.45px">测试仪表2</div>
<div class="c" style="left:523.75px;top:322.58px;font-size:7.45px">B相电压低限报警</div>
<div class="c" style="left:610.20px;top:322.58px;font-size:7.35px">2021-05-10 15:00:29</div>
<div class="l" style="left:659px;top:322.58px;font-size:7.35px">设备2 标签: 类型:低...</div>
<div class="ab" style="left:750px;top:316.88px;width:31px;height:11.6px;border-radius:5.8px;background:#f0d20a;box-shadow:0 0 0 0.8px #1a3d7a"></div>
<div class="c" style="left:765.5px;top:323.08px;font-size:6.4px;color:#fff">一般</div>
<div class="c" style="left:818.3px;top:322.58px;font-size:7.6px;color:#f2475a">未确认</div>
<div class="ab" style="left:864px;top:317.28px;width:43.5px;height:11px;border-radius:1.5px;background:#1b5c72"></div>
<svg class="ab" style="left:870px;top:317.98px" width="10" height="10" viewBox="0 0 10 10"><circle cx="5" cy="5" r="5" fill="#fff"/><path d="M2.8 5.1 L4.3 6.6 L7.3 3.6" fill="none" stroke="#1aa0a8" stroke-width="1.2"/></svg>
<div class="ab" style="left:885.6px;top:318.18px;width:1.1px;height:9.6px;background:#a9bccb"></div>
<svg class="ab" style="left:891.5px;top:319.78px" width="11" height="6.5" viewBox="0 0 11 6.5"><rect x="0" y="0" width="7.6" height="6.5" rx="0.8" fill="#fff"/><path d="M7.4 2.2 L11 0.3 L11 6.2 L7.4 4.3 Z" fill="#fff"/></svg>
<div class="ab" style="left:939.2px;top:315.38px;width:28.8px;height:14.5px;border-radius:1.5px;background:#1a6074"></div>
<div class="c" style="left:953.6px;top:323.58px;font-size:6.6px">查看</div>
<div class="ab" style="left:289.8px;top:341.76px;width:8px;height:8px;background:#fff;border-radius:1.3px;box-shadow:0 0 0 0.6px #1b3a66"></div>
<div class="c" style="left:349.75px;top:346.06px;font-size:7.45px">测试</div>
<div class="c" style="left:437.25px;top:346.06px;font-size:7.45px">测试仪表2</div>
<div class="c" style="left:523.75px;top:346.06px;font-size:7.45px">B相电压低限报警</div>
<div class="c" style="left:610.20px;top:346.06px;font-size:7.35px">2021-05-10 15:00:26</div>
<div class="l" style="left:659px;top:346.06px;font-size:7.35px">设备2 标签: 类型:低...</div>
<div class="ab" style="left:750px;top:340.36px;width:31px;height:11.6px;border-radius:5.8px;background:#f0d20a;box-shadow:0 0 0 0.8px #1a3d7a"></div>
<div class="c" style="left:765.5px;top:346.56px;font-size:6.4px;color:#fff">一般</div>
<div class="c" style="left:818.3px;top:346.06px;font-size:7.6px;color:#f2475a">未确认</div>
<div class="ab" style="left:864px;top:340.76px;width:43.5px;height:11px;border-radius:1.5px;background:#1b5c72"></div>
<svg class="ab" style="left:870px;top:341.46px" width="10" height="10" viewBox="0 0 10 10"><circle cx="5" cy="5" r="5" fill="#fff"/><path d="M2.8 5.1 L4.3 6.6 L7.3 3.6" fill="none" stroke="#1aa0a8" stroke-width="1.2"/></svg>
<div class="ab" style="left:885.6px;top:341.66px;width:1.1px;height:9.6px;background:#a9bccb"></div>
<svg class="ab" style="left:891.5px;top:343.26px" width="11" height="6.5" viewBox="0 0 11 6.5"><rect x="0" y="0" width="7.6" height="6.5" rx="0.8" fill="#fff"/><path d="M7.4 2.2 L11 0.3 L11 6.2 L7.4 4.3 Z" fill="#fff"/></svg>
<div class="ab" style="left:939.2px;top:338.86px;width:28.8px;height:14.5px;border-radius:1.5px;background:#1a6074"></div>
<div class="c" style="left:953.6px;top:347.06px;font-size:6.6px">查看</div>
<div class="ab" style="left:289.8px;top:365.24px;width:8px;height:8px;background:#fff;border-radius:1.3px;box-shadow:0 0 0 0.6px #1b3a66"></div>
<div class="c" style="left:349.75px;top:369.54px;font-size:7.45px">测试</div>
<div class="c" style="left:437.25px;top:369.54px;font-size:7.45px">测试仪表2</div>
<div class="c" style="left:523.75px;top:369.54px;font-size:7.45px">A相电压低限报警</div>
<div class="c" style="left:610.20px;top:369.54px;font-size:7.35px">2021-05-10 15:00:24</div>
<div class="l" style="left:659px;top:369.54px;font-size:7.35px">设备2 标签: 类型:低...</div>
<div class="ab" style="left:750px;top:363.84px;width:31px;height:11.6px;border-radius:5.8px;background:#f0d20a;box-shadow:0 0 0 0.8px #1a3d7a"></div>
<div class="c" style="left:765.5px;top:370.04px;font-size:6.4px;color:#fff">一般</div>
<div class="c" style="left:818.3px;top:369.54px;font-size:7.6px;color:#f2475a">未确认</div>
<div class="ab" style="left:864px;top:364.24px;width:43.5px;height:11px;border-radius:1.5px;background:#1b5c72"></div>
<svg class="ab" style="left:870px;top:364.94px" width="10" height="10" viewBox="0 0 10 10"><circle cx="5" cy="5" r="5" fill="#fff"/><path d="M2.8 5.1 L4.3 6.6 L7.3 3.6" fill="none" stroke="#1aa0a8" stroke-width="1.2"/></svg>
<div class="ab" style="left:885.6px;top:365.14px;width:1.1px;height:9.6px;background:#a9bccb"></div>
<svg class="ab" style="left:891.5px;top:366.74px" width="11" height="6.5" viewBox="0 0 11 6.5"><rect x="0" y="0" width="7.6" height="6.5" rx="0.8" fill="#fff"/><path d="M7.4 2.2 L11 0.3 L11 6.2 L7.4 4.3 Z" fill="#fff"/></svg>
<div class="ab" style="left:939.2px;top:362.34px;width:28.8px;height:14.5px;border-radius:1.5px;background:#1a6074"></div>
<div class="c" style="left:953.6px;top:370.54px;font-size:6.6px">查看</div>
<div class="ab" style="left:289.8px;top:388.72px;width:8px;height:8px;background:#fff;border-radius:1.3px;box-shadow:0 0 0 0.6px #1b3a66"></div>
<div class="c" style="left:349.75px;top:393.02px;font-size:7.45px">测试</div>
<div class="c" style="left:437.25px;top:393.02px;font-size:7.45px">1#门</div>
<div class="c" style="left:523.75px;top:393.02px;font-size:7.45px">关门报警</div>
<div class="c" style="left:610.20px;top:393.02px;font-size:7.35px">2021-05-10 13:37:40</div>
<div class="l" style="left:659px;top:393.02px;font-size:7.35px">设备5 标签:设备5 类...</div>
<div class="ab" style="left:750px;top:387.32px;width:31px;height:11.6px;border-radius:5.8px;background:#f0d20a;box-shadow:0 0 0 0.8px #1a3d7a"></div>
<div class="c" style="left:765.5px;top:393.52px;font-size:6.4px;color:#fff">一般</div>
<div class="c" style="left:818.3px;top:393.02px;font-size:7.6px;color:#f2475a">未确认</div>
<div class="ab" style="left:864px;top:387.72px;width:43.5px;height:11px;border-radius:1.5px;background:#1b5c72"></div>
<svg class="ab" style="left:870px;top:388.42px" width="10" height="10" viewBox="0 0 10 10"><circle cx="5" cy="5" r="5" fill="#fff"/><path d="M2.8 5.1 L4.3 6.6 L7.3 3.6" fill="none" stroke="#1aa0a8" stroke-width="1.2"/></svg>
<div class="ab" style="left:885.6px;top:388.62px;width:1.1px;height:9.6px;background:#a9bccb"></div>
<svg class="ab" style="left:891.5px;top:390.22px" width="11" height="6.5" viewBox="0 0 11 6.5"><rect x="0" y="0" width="7.6" height="6.5" rx="0.8" fill="#fff"/><path d="M7.4 2.2 L11 0.3 L11 6.2 L7.4 4.3 Z" fill="#fff"/></svg>
<div class="ab" style="left:939.2px;top:385.82px;width:28.8px;height:14.5px;border-radius:1.5px;background:#1a6074"></div>
<div class="c" style="left:953.6px;top:394.02px;font-size:6.6px">查看</div>
<div class="ab" style="left:289.8px;top:412.20px;width:8px;height:8px;background:#fff;border-radius:1.3px;box-shadow:0 0 0 0.6px #1b3a66"></div>
<div class="c" style="left:349.75px;top:416.50px;font-size:7.45px">测试</div>
<div class="c" style="left:437.25px;top:416.50px;font-size:7.45px">1#门</div>
<div class="c" style="left:523.75px;top:416.50px;font-size:7.45px">开门报警</div>
<div class="c" style="left:610.20px;top:416.50px;font-size:7.35px">2021-05-10 13:36:58</div>
<div class="l" style="left:659px;top:416.50px;font-size:7.35px">设备5 标签:设备5 类...</div>
<div class="ab" style="left:750px;top:410.80px;width:31px;height:11.6px;border-radius:5.8px;background:#f0d20a;box-shadow:0 0 0 0.8px #1a3d7a"></div>
<div class="c" style="left:765.5px;top:417.00px;font-size:6.4px;color:#fff">一般</div>
<div class="c" style="left:818.3px;top:416.50px;font-size:7.6px;color:#f2475a">未确认</div>
<div class="ab" style="left:864px;top:411.20px;width:43.5px;height:11px;border-radius:1.5px;background:#1b5c72"></div>
<svg class="ab" style="left:870px;top:411.90px" width="10" height="10" viewBox="0 0 10 10"><circle cx="5" cy="5" r="5" fill="#fff"/><path d="M2.8 5.1 L4.3 6.6 L7.3 3.6" fill="none" stroke="#1aa0a8" stroke-width="1.2"/></svg>
<div class="ab" style="left:885.6px;top:412.10px;width:1.1px;height:9.6px;background:#a9bccb"></div>
<svg class="ab" style="left:891.5px;top:413.70px" width="11" height="6.5" viewBox="0 0 11 6.5"><rect x="0" y="0" width="7.6" height="6.5" rx="0.8" fill="#fff"/><path d="M7.4 2.2 L11 0.3 L11 6.2 L7.4 4.3 Z" fill="#fff"/></svg>
<div class="ab" style="left:939.2px;top:409.30px;width:28.8px;height:14.5px;border-radius:1.5px;background:#1a6074"></div>
<div class="c" style="left:953.6px;top:417.50px;font-size:6.6px">查看</div>
<div class="ab" style="left:289.8px;top:435.68px;width:8px;height:8px;background:#fff;border-radius:1.3px;box-shadow:0 0 0 0.6px #1b3a66"></div>
<div class="c" style="left:349.75px;top:439.98px;font-size:7.45px">测试</div>
<div class="c" style="left:437.25px;top:439.98px;font-size:7.45px">测试仪表2</div>
<div class="c" style="left:523.75px;top:439.98px;font-size:7.45px">A相电压低限报警</div>
<div class="c" style="left:610.20px;top:439.98px;font-size:7.35px">2021-05-10 04:54:15</div>
<div class="l" style="left:659px;top:439.98px;font-size:7.35px">设备2 标签: 类型:低...</div>
<div class="ab" style="left:750px;top:434.28px;width:31px;height:11.6px;border-radius:5.8px;background:#f0d20a;box-shadow:0 0 0 0.8px #1a3d7a"></div>
<div class="c" style="left:765.5px;top:440.48px;font-size:6.4px;color:#fff">一般</div>
<div class="c" style="left:818.3px;top:439.98px;font-size:7.6px;color:#f2475a">未确认</div>
<div class="ab" style="left:864px;top:434.68px;width:43.5px;height:11px;border-radius:1.5px;background:#1b5c72"></div>
<svg class="ab" style="left:870px;top:435.38px" width="10" height="10" viewBox="0 0 10 10"><circle cx="5" cy="5" r="5" fill="#fff"/><path d="M2.8 5.1 L4.3 6.6 L7.3 3.6" fill="none" stroke="#1aa0a8" stroke-width="1.2"/></svg>
<div class="ab" style="left:885.6px;top:435.58px;width:1.1px;height:9.6px;background:#a9bccb"></div>
<svg class="ab" style="left:891.5px;top:437.18px" width="11" height="6.5" viewBox="0 0 11 6.5"><rect x="0" y="0" width="7.6" height="6.5" rx="0.8" fill="#fff"/><path d="M7.4 2.2 L11 0.3 L11 6.2 L7.4 4.3 Z" fill="#fff"/></svg>
<div class="ab" style="left:939.2px;top:432.78px;width:28.8px;height:14.5px;border-radius:1.5px;background:#1a6074"></div>
<div class="c" style="left:953.6px;top:440.98px;font-size:6.6px">查看</div>
<div class="ab" style="left:289.8px;top:459.16px;width:8px;height:8px;background:#fff;border-radius:1.3px;box-shadow:0 0 0 0.6px #1b3a66"></div>
<div class="c" style="left:349.75px;top:463.46px;font-size:7.45px">测试</div>
<div class="c" style="left:437.25px;top:463.46px;font-size:7.45px">测试仪表2</div>
<div class="c" style="left:523.75px;top:463.46px;font-size:7.45px">B相电压低限报警</div>
<div class="c" style="left:610.20px;top:463.46px;font-size:7.35px">2021-05-10 04:54:15</div>
<div class="l" style="left:659px;top:463.46px;font-size:7.35px">设备2 标签: 类型:低...</div>
<div class="ab" style="left:750px;top:457.76px;width:31px;height:11.6px;border-radius:5.8px;background:#f0d20a;box-shadow:0 0 0 0.8px #1a3d7a"></div>
<div class="c" style="left:765.5px;top:463.96px;font-size:6.4px;color:#fff">一般</div>
<div class="c" style="left:818.3px;top:463.46px;font-size:7.6px;color:#f2475a">未确认</div>
<div class="ab" style="left:864px;top:458.16px;width:43.5px;height:11px;border-radius:1.5px;background:#1b5c72"></div>
<svg class="ab" style="left:870px;top:458.86px" width="10" height="10" viewBox="0 0 10 10"><circle cx="5" cy="5" r="5" fill="#fff"/><path d="M2.8 5.1 L4.3 6.6 L7.3 3.6" fill="none" stroke="#1aa0a8" stroke-width="1.2"/></svg>
<div class="ab" style="left:885.6px;top:459.06px;width:1.1px;height:9.6px;background:#a9bccb"></div>
<svg class="ab" style="left:891.5px;top:460.66px" width="11" height="6.5" viewBox="0 0 11 6.5"><rect x="0" y="0" width="7.6" height="6.5" rx="0.8" fill="#fff"/><path d="M7.4 2.2 L11 0.3 L11 6.2 L7.4 4.3 Z" fill="#fff"/></svg>
<div class="ab" style="left:939.2px;top:456.26px;width:28.8px;height:14.5px;border-radius:1.5px;background:#1a6074"></div>
<div class="c" style="left:953.6px;top:464.46px;font-size:6.6px">查看</div>
<div class="ab" style="left:284.4px;top:478.3px;width:51px;height:18.5px;border-radius:2px;background:#1a6478"></div>
<div class="c" style="left:309.9px;top:487.8px;font-size:7.35px">一键确认</div>
<div class="l" style="left:675.2px;top:485.3px;font-size:7.15px">共 1476 条</div>
<div class="ab" style="left:715.5px;top:478.2px;width:52px;height:14.6px;background:#1f3466;border:1px solid #1c5f78;border-radius:2px"></div>
<div class="l" style="left:724.6px;top:485.6px;font-size:7.35px">50条/页</div>
<svg class="ab" style="left:758.6px;top:484.2px" width="7" height="4" viewBox="-0.5 -0.5 7 4"><path d="M0.3 0.2 L3 2.8 L5.7 0.2" fill="none" stroke="#8d9ab3" stroke-width="0.75"/></svg>
<svg class="ab" style="left:784px;top:481.8px" width="4" height="7" viewBox="0 0 4 7"><path d="M3.4 0.5 L0.8 3.5 L3.4 6.5" fill="none" stroke="#fff" stroke-width="1.2"/></svg>
<div class="ab" style="left:798.8px;top:478.3px;width:15.8px;height:14.7px;border-radius:1.5px;background:#1a6478"></div>
<div class="c" style="left:806.7px;top:485.7px;font-size:7.35px;font-weight:bold">1</div>
<div class="c" style="left:827.4px;top:485.7px;font-size:7.35px;font-weight:bold">2</div>
<div class="c" style="left:848.2px;top:485.7px;font-size:7.35px;font-weight:bold">3</div>
<div class="c" style="left:869.1px;top:485.7px;font-size:7.35px;font-weight:bold">4</div>
<div class="c" style="left:890px;top:485.7px;font-size:7.35px;font-weight:bold">5</div>
<div class="c" style="left:910.8px;top:485.7px;font-size:7.35px;font-weight:bold">6</div>
<div class="c" style="left:952.4px;top:485.7px;font-size:7.35px;font-weight:bold">30</div>
<div class="c" style="left:931.8px;top:485.2px;font-size:7.35px;font-weight:bold">···</div>
<svg class="ab" style="left:971.6px;top:481.8px" width="4" height="7" viewBox="0 0 4 7"><path d="M0.6 0.5 L3.2 3.5 L0.6 6.5" fill="none" stroke="#fff" stroke-width="1.2"/></svg>
<div class="t" style="left:849.5px;top:457.5px;font-size:10.9px;color:rgba(200,205,215,0.5)">激活 Windows</div>
<div class="t" style="left:849.5px;top:470.8px;font-size:8.2px;color:rgba(200,205,215,0.5)">转到“设置”以激活 Windows。</div>
</body></html>
